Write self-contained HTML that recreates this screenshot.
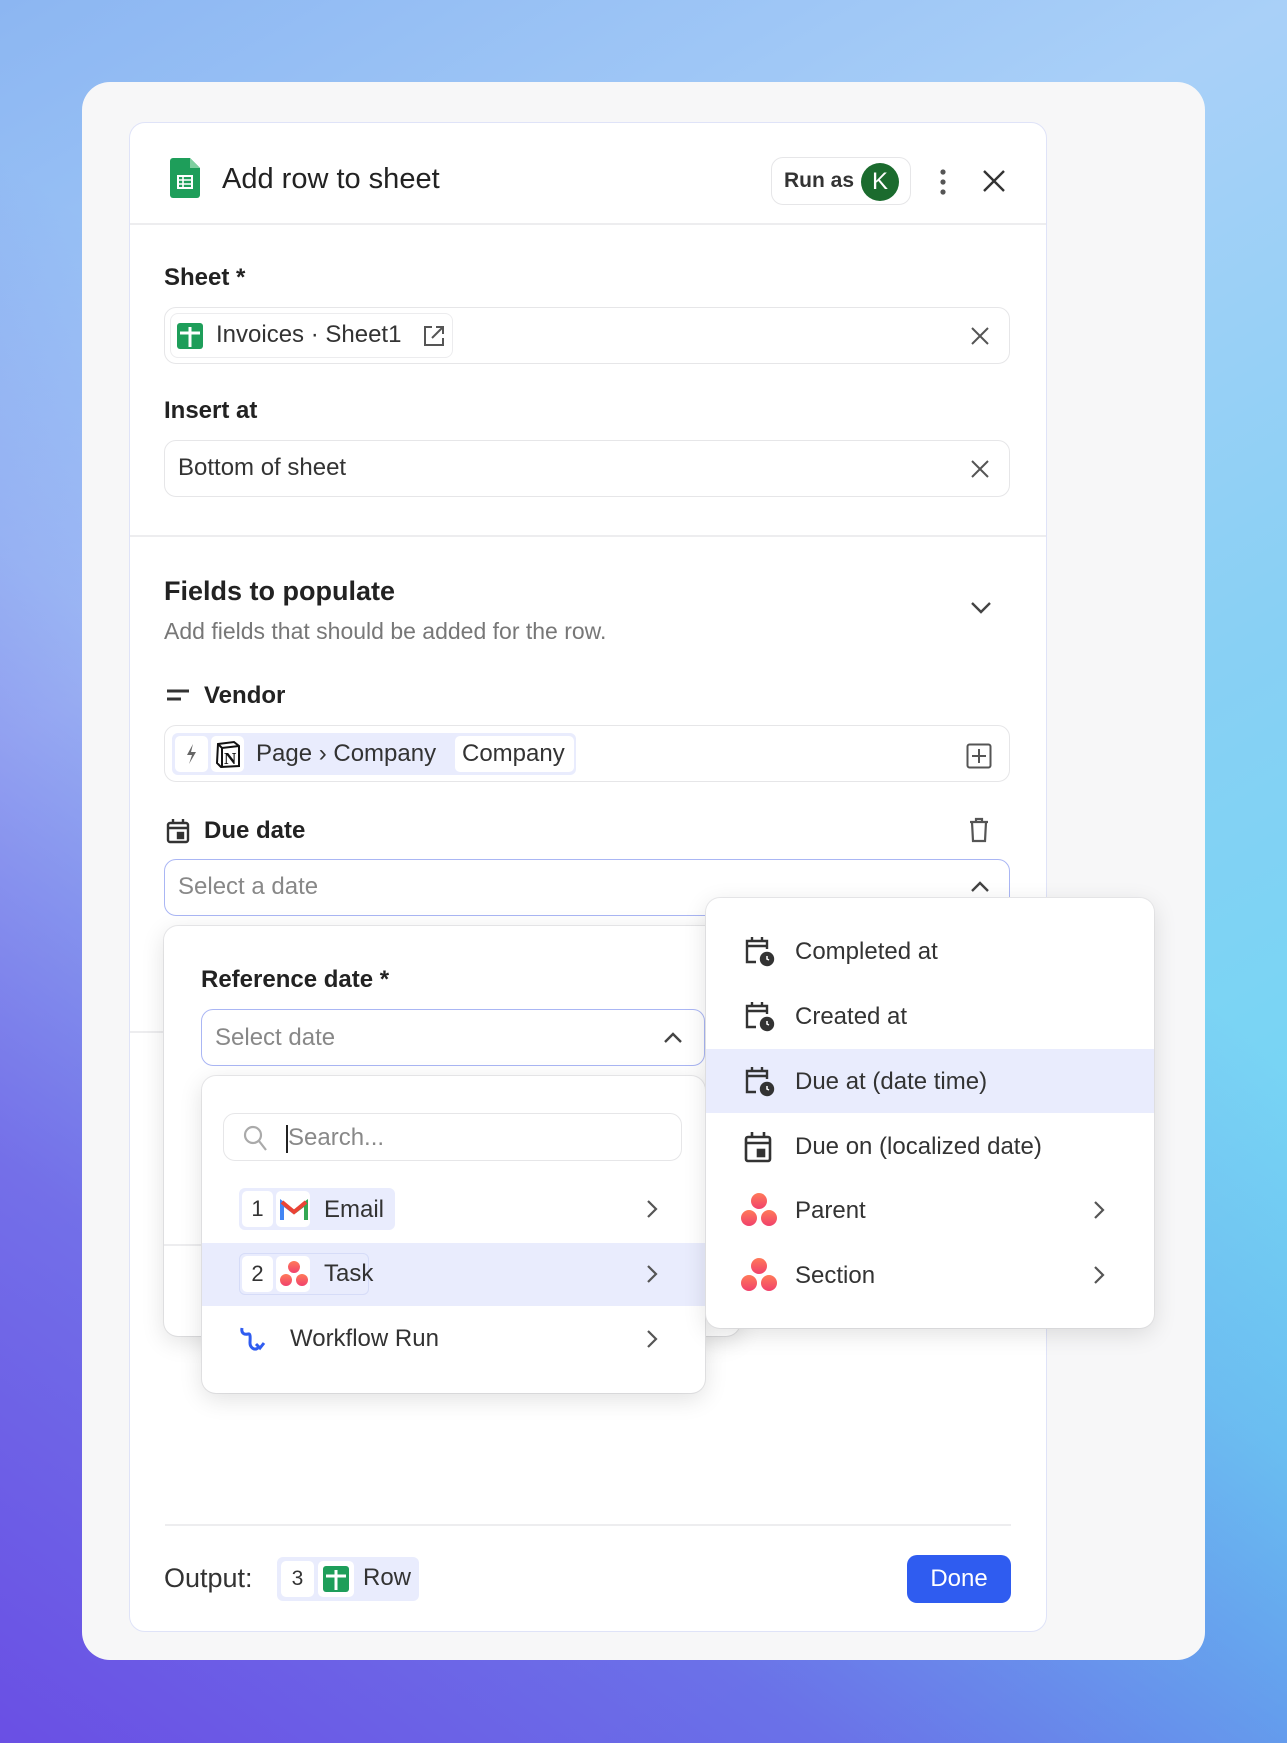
<!DOCTYPE html>
<html><head><meta charset="utf-8"><style>
*{box-sizing:border-box;margin:0;padding:0}
body{width:1287px;height:1743px;overflow:hidden;font-family:"Liberation Sans",sans-serif;color:#222;position:relative;line-height:1.32;
background:linear-gradient(150deg,#8cb6f2 0%,#a9d0f8 30%,#88d0f4 55%,#5fdcf4 100%);}
.bgl{position:absolute;inset:0;background:linear-gradient(35deg,#6a4fe4 0%,rgba(106,79,228,0.75) 22%,rgba(106,79,228,0.2) 45%,rgba(106,79,228,0) 60%);}
.abs{position:absolute}
.card{left:82px;top:82px;width:1123px;height:1578px;background:#f7f7f8;border-radius:28px}
.panel{left:129px;top:122px;width:918px;height:1510px;background:#fff;border:1.5px solid #dfe3f8;border-radius:16px;overflow:hidden}
.label{font-size:24px;font-weight:bold;color:#222}
.inp{border:1.5px solid #e6e6e8;border-radius:12px;background:#fff;font-size:24px}
.pill{background:#e9ecfd;border-radius:6px}
.box{background:#fff;border-radius:5px;display:inline-block}
.pop{background:#fff;border-radius:14px;box-shadow:0 6px 24px rgba(0,0,0,0.12),0 0 0 1px #ececee}
</style></head><body>
<div class="bgl"></div>
<div class="abs card"></div>
<div class="abs panel">
 <div class="abs" style="left:0;right:0;top:100px;height:2px;background:#ededef"></div>
 <div class="abs" style="left:0;right:0;top:412px;height:2px;background:#ededef"></div>
 <div class="abs" style="left:0;width:40px;top:908px;height:2px;background:#ededef"></div>
 <div class="abs" style="left:35px;right:35px;top:1401px;height:2px;background:#ededef"></div>
</div>
<!-- header -->
<svg class="abs" style="left:170px;top:158px" width="30" height="40" viewBox="0 0 30 40"><path d="M0 3a3 3 0 0 1 3-3h17l10 10v27a3 3 0 0 1-3 3H3a3 3 0 0 1-3-3z" fill="#1e9e5a"/><path d="M20 0v10h10z" fill="#7fcf9f"/><rect x="8" y="18" width="14" height="12" fill="none" stroke="#fff" stroke-width="2"/><path d="M8 22h14M8 26h14M13 18v12" stroke="#fff" stroke-width="1.6"/></svg>
<div class="abs" style="left:222px;top:160px;font-size:29px;color:#222">Add row to sheet</div>
<div class="abs" style="left:771px;top:157px;width:140px;height:48px;border:1.5px solid #e6e6e8;border-radius:12px"></div>
<div class="abs" style="left:784px;top:167px;font-size:21px;font-weight:bold;color:#333">Run as</div>
<div class="abs" style="left:861px;top:163px;width:38px;height:38px;border-radius:50%;background:#1b6b2e;color:#fff;font-size:24px;text-align:center;line-height:38px">K</div>
<svg class="abs" style="left:938px;top:168px" width="10" height="28"><circle cx="5" cy="4" r="2.6" fill="#555"/><circle cx="5" cy="14" r="2.6" fill="#555"/><circle cx="5" cy="24" r="2.6" fill="#555"/></svg>
<svg class="abs" style="left:982px;top:169px" width="24" height="24"><path d="M2 2L22 22M22 2L2 22" stroke="#333" stroke-width="2.4"/></svg>
<!-- Sheet -->
<div class="abs label" style="left:164px;top:262px">Sheet *</div>
<div class="abs inp" style="left:164px;top:307px;width:846px;height:57px"></div>
<div class="abs" style="left:170px;top:313px;width:283px;height:45px;border:1.5px solid #ececee;border-radius:8px"></div>
<svg class="abs" style="left:177px;top:323px" width="26" height="26"><rect width="26" height="26" rx="3" fill="#1e9e5a"/><path d="M3 10h20M13 4v20" stroke="#fff" stroke-width="3"/></svg>
<div class="abs" style="left:216px;top:319px;font-size:24px;color:#333">Invoices · Sheet1</div>
<svg class="abs" style="left:422px;top:324px" width="24" height="24" fill="none" stroke="#555" stroke-width="2"><path d="M10 3H3v18h18v-7"/><path d="M14 3h7v7M21 3L10 14"/></svg>
<svg class="abs" style="left:971px;top:327px" width="18" height="18"><path d="M1 1L17 17M17 1L1 17" stroke="#555" stroke-width="2"/></svg>
<!-- Insert at -->
<div class="abs label" style="left:164px;top:395px">Insert at</div>
<div class="abs inp" style="left:164px;top:440px;width:846px;height:57px"></div>
<div class="abs" style="left:178px;top:452px;font-size:24px;color:#333">Bottom of sheet</div>
<svg class="abs" style="left:971px;top:460px" width="18" height="18"><path d="M1 1L17 17M17 1L1 17" stroke="#555" stroke-width="2"/></svg>
<!-- Fields -->
<div class="abs" style="left:164px;top:574px;font-size:27px;font-weight:bold;color:#222">Fields to populate</div>
<div class="abs" style="left:164px;top:616px;font-size:23px;color:#777">Add fields that should be added for the row.</div>
<svg class="abs" style="left:970px;top:601px" width="22" height="14"><path d="M2 2l9 9 9-9" fill="none" stroke="#444" stroke-width="2.4"/></svg>
<!-- Vendor -->
<svg class="abs" style="left:166px;top:688px" width="24" height="16"><path d="M1 3h22M1 11h14" stroke="#333" stroke-width="3"/></svg>
<div class="abs label" style="left:204px;top:680px">Vendor</div>
<div class="abs inp" style="left:164px;top:725px;width:846px;height:57px"></div>
<div class="abs pill" style="left:172px;top:733px;width:404px;height:42px"></div>
<div class="abs box" style="left:175px;top:736px;width:33px;height:36px"></div>
<svg class="abs" style="left:184px;top:743px" width="14" height="22"><path d="M9 1L3 12h5l-3 9 7-12H7z" fill="#666"/></svg>
<div class="abs box" style="left:211px;top:736px;width:33px;height:36px"></div>
<svg class="abs" style="left:215px;top:740px" width="26" height="28" viewBox="0 0 26 28"><path d="M3 4l16-2 5 4v20l-18 1-4-4z" fill="#fff" stroke="#111" stroke-width="2"/><path d="M3 4l4 4 17-2M7 8v19" fill="none" stroke="#111" stroke-width="2"/><text x="9" y="24" font-family="Liberation Serif" font-weight="bold" font-size="17" fill="#111">N</text></svg>
<div class="abs" style="left:256px;top:738px;font-size:24px;color:#333">Page › Company</div>
<div class="abs box" style="left:455px;top:736px;width:119px;height:36px"></div>
<div class="abs" style="left:462px;top:738px;font-size:24px;color:#333">Company</div>
<svg class="abs" style="left:966px;top:743px" width="26" height="26" fill="none" stroke="#555" stroke-width="2"><rect x="1.5" y="1.5" width="23" height="23" rx="2"/><path d="M13 6v14M6 13h14"/></svg>
<!-- Due date -->
<svg class="abs" style="left:166px;top:818px" width="24" height="26" fill="none" stroke="#333" stroke-width="2.4"><rect x="2" y="5" width="20" height="19" rx="2"/><path d="M2 10h20M7 1v5M17 1v5"/><rect x="12" y="15" width="5" height="5" fill="#333"/></svg>
<div class="abs label" style="left:204px;top:815px">Due date</div>
<svg class="abs" style="left:969px;top:817px" width="20" height="26" fill="none" stroke="#555" stroke-width="2.2"><path d="M1 5h18M7 5V2h6v3M3 5l1 19h12l1-19"/></svg>
<div class="abs" style="left:164px;top:859px;width:846px;height:57px;border:1.5px solid #aab6f4;border-radius:12px;background:#fff"></div>
<div class="abs" style="left:178px;top:871px;font-size:24px;color:#888">Select a date</div>
<svg class="abs" style="left:970px;top:880px" width="20" height="13"><path d="M2 11l8-8 8 8" fill="none" stroke="#444" stroke-width="2.4"/></svg>
<!-- inner popover -->
<div class="abs pop" style="left:164px;top:926px;width:576px;height:410px"></div>
<div class="abs label" style="left:201px;top:964px">Reference date *</div>
<div class="abs" style="left:201px;top:1009px;width:504px;height:57px;border:1.5px solid #aab6f4;border-radius:12px;background:#fff"></div>
<div class="abs" style="left:215px;top:1022px;font-size:24px;color:#888">Select date</div>
<svg class="abs" style="left:663px;top:1031px" width="20" height="13"><path d="M2 11l8-8 8 8" fill="none" stroke="#444" stroke-width="2.4"/></svg>
<div class="abs" style="left:164px;width:40px;top:1244px;height:2px;background:#ededef"></div>
<!-- list dropdown -->
<div class="abs pop" style="left:202px;top:1076px;width:503px;height:317px;overflow:hidden">
 <div class="abs" style="left:21px;top:37px;width:459px;height:48px;border:1.5px solid #e6e6e8;border-radius:12px"></div>
 <svg class="abs" style="left:40px;top:48px" width="26" height="28" fill="none" stroke="#aaa" stroke-width="2.2"><circle cx="11" cy="11" r="8"/><path d="M17 17l7 9"/></svg>
 <div class="abs" style="left:84px;top:49px;width:2px;height:28px;background:#222"></div>
 <div class="abs" style="left:86px;top:46px;font-size:24px;color:#888">Search...</div>
 <div class="abs pill" style="left:37px;top:112px;width:156px;height:42px"></div>
 <div class="abs box" style="left:40px;top:115px;width:31px;height:36px;text-align:center;line-height:36px;font-size:22px;color:#333">1</div>
 <div class="abs box" style="left:74px;top:115px;width:34px;height:36px"></div>
 <svg class="abs" style="left:78px;top:122px" width="28" height="22" viewBox="0 0 28 22"><path d="M2 22V5l12 9" fill="none" stroke="#4285f4" stroke-width="4"/><path d="M26 22V5l-12 9" fill="none" stroke="#34a853" stroke-width="4"/><path d="M2 4l12 10 12-10" fill="none" stroke="#ea4335" stroke-width="4"/></svg>
 <div class="abs" style="left:122px;top:118px;font-size:24px;color:#333">Email</div>
 <div class="abs" style="left:0;right:0;top:167px;height:63px;background:#e9ecfd"></div>
 <div class="abs" style="left:37px;top:177px;width:130px;height:42px;border:1.5px solid #d6dcf8;border-radius:6px"></div>
 <div class="abs box" style="left:40px;top:180px;width:31px;height:36px;text-align:center;line-height:36px;font-size:22px;color:#333">2</div>
 <div class="abs box" style="left:74px;top:180px;width:34px;height:36px"></div>
 <svg class="abs" style="left:78px;top:184px" width="28" height="28"><defs><linearGradient id="ag" x1="0" y1="0" x2="0" y2="1"><stop offset="0" stop-color="#ff7a59"/><stop offset="1" stop-color="#f1416c"/></linearGradient></defs><circle cx="14" cy="7" r="6" fill="url(#ag)"/><circle cx="6" cy="20" r="6" fill="url(#ag)"/><circle cx="22" cy="20" r="6" fill="url(#ag)"/></svg>
 <div class="abs" style="left:122px;top:182px;font-size:24px;color:#333">Task</div>
 <svg class="abs" style="left:36px;top:250px" width="28" height="30" fill="none" stroke="#2f5cf0" stroke-width="3"><path d="M4 2c-1 5 2 7 6 6 3-1 2 5 2 9 0 4 4 8 8 5M18 18l4 4 4-5"/></svg>
 <div class="abs" style="left:88px;top:247px;font-size:24px;color:#333">Workflow Run</div>
 <svg class="abs" style="left:444px;top:123px" width="12" height="20"><path d="M2 2l8 8-8 8" fill="none" stroke="#555" stroke-width="2.2"/></svg>
 <svg class="abs" style="left:444px;top:188px" width="12" height="20"><path d="M2 2l8 8-8 8" fill="none" stroke="#555" stroke-width="2.2"/></svg>
 <svg class="abs" style="left:444px;top:253px" width="12" height="20"><path d="M2 2l8 8-8 8" fill="none" stroke="#555" stroke-width="2.2"/></svg>
</div>
<!-- right menu -->
<div class="abs pop" style="left:706px;top:898px;width:448px;height:430px;overflow:hidden">
 <div class="abs" style="left:0;right:0;top:151px;height:64px;background:#e9ecfd"></div>
 <svg class="abs" style="left:38px;top:38px" width="32" height="32" fill="none" stroke="#333" stroke-width="2.4"><path d="M12 26H3V5h20v8M3 10h20M8 1v5M18 1v5"/><circle cx="23" cy="23" r="6" fill="#333"/><path d="M23 20v3l2 1" stroke="#fff" stroke-width="1.5"/></svg>
 <div class="abs" style="left:89px;top:38px;font-size:24px;color:#333">Completed at</div>
 <svg class="abs" style="left:38px;top:103px" width="32" height="32" fill="none" stroke="#333" stroke-width="2.4"><path d="M12 26H3V5h20v8M3 10h20M8 1v5M18 1v5"/><circle cx="23" cy="23" r="6" fill="#333"/><path d="M23 20v3l2 1" stroke="#fff" stroke-width="1.5"/></svg>
 <div class="abs" style="left:89px;top:103px;font-size:24px;color:#333">Created at</div>
 <svg class="abs" style="left:38px;top:168px" width="32" height="32" fill="none" stroke="#333" stroke-width="2.4"><path d="M12 26H3V5h20v8M3 10h20M8 1v5M18 1v5"/><circle cx="23" cy="23" r="6" fill="#333"/><path d="M23 20v3l2 1" stroke="#fff" stroke-width="1.5"/></svg>
 <div class="abs" style="left:89px;top:168px;font-size:24px;color:#333">Due at (date time)</div>
 <svg class="abs" style="left:38px;top:233px" width="28" height="32" fill="none" stroke="#333" stroke-width="2.6"><rect x="2" y="6" width="24" height="24" rx="2"/><path d="M2 12h24M8 1v6M20 1v6"/><rect x="14" y="19" width="6" height="6" fill="#333"/></svg>
 <div class="abs" style="left:89px;top:233px;font-size:24px;color:#333">Due on (localized date)</div>
 <svg class="abs" style="left:34px;top:294px" width="38" height="36"><circle cx="19" cy="9" r="8" fill="url(#ag)"/><circle cx="9" cy="26" r="8" fill="url(#ag)"/><circle cx="29" cy="26" r="8" fill="url(#ag)"/></svg>
 <div class="abs" style="left:89px;top:297px;font-size:24px;color:#333">Parent</div>
 <svg class="abs" style="left:34px;top:359px" width="38" height="36"><circle cx="19" cy="9" r="8" fill="url(#ag)"/><circle cx="9" cy="26" r="8" fill="url(#ag)"/><circle cx="29" cy="26" r="8" fill="url(#ag)"/></svg>
 <div class="abs" style="left:89px;top:362px;font-size:24px;color:#333">Section</div>
 <svg class="abs" style="left:387px;top:302px" width="12" height="20"><path d="M2 2l8 8-8 8" fill="none" stroke="#555" stroke-width="2.2"/></svg>
 <svg class="abs" style="left:387px;top:367px" width="12" height="20"><path d="M2 2l8 8-8 8" fill="none" stroke="#555" stroke-width="2.2"/></svg>
</div>
<!-- footer -->
<div class="abs" style="left:164px;top:1561px;font-size:27px;color:#333">Output:</div>
<div class="abs pill" style="left:277px;top:1557px;width:142px;height:44px"></div>
<div class="abs box" style="left:281px;top:1561px;width:33px;height:36px;text-align:center;line-height:36px;font-size:21px;color:#333">3</div>
<div class="abs box" style="left:318px;top:1561px;width:36px;height:36px"></div>
<svg class="abs" style="left:323px;top:1566px" width="26" height="26"><rect width="26" height="26" rx="3" fill="#1e9e5a"/><path d="M3 10h20M13 4v20" stroke="#fff" stroke-width="3"/></svg>
<div class="abs" style="left:363px;top:1562px;font-size:24px;color:#333">Row</div>
<div class="abs" style="left:907px;top:1555px;width:104px;height:48px;background:#2f5cf0;border-radius:10px;color:#fff;font-size:24px;text-align:center;line-height:48px">Done</div>
</body></html>
